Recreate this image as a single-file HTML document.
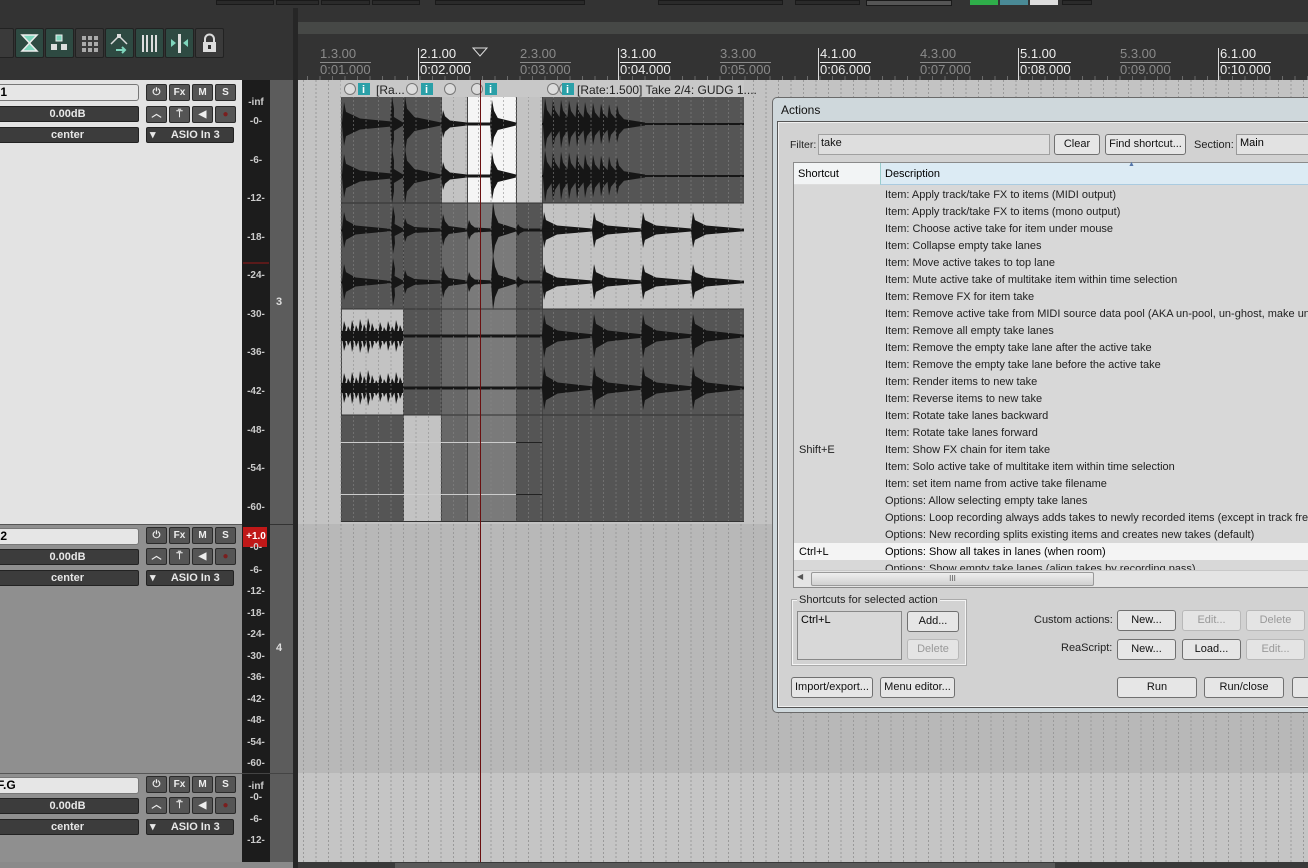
<!DOCTYPE html>
<html><head><meta charset="utf-8">
<style>
*{box-sizing:border-box;margin:0;padding:0}
body{width:1308px;height:868px;overflow:hidden;background:#333;font-family:"Liberation Sans",sans-serif;position:relative}
.a{position:absolute}
.tb{position:absolute;top:28px;width:29px;height:30px;border:1px solid #222;border-radius:2px}
.teal{background:#2e4a42}
.dk{background:#3a3a3a}
.fld{position:absolute;background:#3c3c3c;border:1px solid #222;border-radius:2px;color:#e8e8e8;font-size:11px;text-align:center;line-height:15px;font-weight:bold}
.btn{position:absolute;width:21px;height:17px;background:#555;border:1px solid #2a2a2a;border-radius:2px;color:#eee;font-size:10px;font-weight:bold;text-align:center;line-height:15px}
.ml{position:absolute;left:242px;width:28px;text-align:center;color:#ccc;font-size:10px;font-weight:bold}
.rl{position:absolute;top:47px;font-size:13px;line-height:14px}
.rl span{display:block;border-top:1px solid currentColor;margin-top:1px;padding-top:0}
.db{position:absolute;height:21px;background:#e6e6e6;border:1px solid #707070;border-radius:3px;font-size:11px;color:#111;text-align:center;line-height:19px}
.dis{color:#999;background:#e4e4e4;border-color:#b8b8b8}
.row{position:absolute;left:885px;font-size:11px;color:#222;white-space:nowrap}
</style></head><body>
<div class="a" style="left:216px;top:0;width:58px;height:5px;background:#2a2a2a;border:1px solid #1a1a1a"></div>
<div class="a" style="left:276px;top:0;width:43px;height:5px;background:#2a2a2a;border:1px solid #1a1a1a"></div>
<div class="a" style="left:321px;top:0;width:49px;height:5px;background:#2a2a2a;border:1px solid #1a1a1a"></div>
<div class="a" style="left:372px;top:0;width:48px;height:5px;background:#2a2a2a;border:1px solid #1a1a1a"></div>
<div class="a" style="left:435px;top:0;width:150px;height:5px;background:#2a2a2a;border:1px solid #1a1a1a"></div>
<div class="a" style="left:658px;top:0;width:125px;height:5px;background:#2a2a2a;border:1px solid #1a1a1a"></div>
<div class="a" style="left:795px;top:0;width:65px;height:5px;background:#2a2a2a;border:1px solid #1a1a1a"></div>
<div class="a" style="left:866px;top:0;width:86px;height:6px;background:#555;border:1px solid #1a1a1a"></div>
<div class="a" style="left:970px;top:0;width:28px;height:5px;background:#2fae4a"></div>
<div class="a" style="left:1000px;top:0;width:28px;height:5px;background:#4a8a96"></div>
<div class="a" style="left:1030px;top:0;width:28px;height:5px;background:#ddd"></div>
<div class="a" style="left:1062px;top:0;width:30px;height:5px;background:#2a2a2a;border:1px solid #1a1a1a"></div>

<div class="tb dk" style="left:-15px"></div>
<div class="tb teal" style="left:15px"><svg width="27" height="28"><polygon points="6,6 21,6 6,22 21,22" fill="#7fd6bd" stroke="#eee" stroke-width="1.5"/></svg></div>
<div class="tb teal" style="left:45px"><svg width="27" height="28"><rect x="10" y="6" width="6" height="6" fill="#7fd6bd" stroke="#eee"/><rect x="5" y="15" width="6" height="6" fill="#ddd"/><rect x="15" y="15" width="6" height="6" fill="#ddd"/></svg></div>
<div class="tb dk" style="left:75px"><svg width="27" height="28" fill="#aaa"><rect x="6" y="7" width="4" height="4"/><rect x="12" y="7" width="4" height="4"/><rect x="18" y="7" width="4" height="4"/><rect x="6" y="13" width="4" height="4"/><rect x="12" y="13" width="4" height="4"/><rect x="18" y="13" width="4" height="4"/><rect x="6" y="19" width="4" height="4"/><rect x="12" y="19" width="4" height="4"/><rect x="18" y="19" width="4" height="4"/></svg></div>
<div class="tb teal" style="left:105px"><svg width="27" height="28"><polyline points="5,15 13,7 21,15" fill="none" stroke="#ddd" stroke-width="1.5"/><rect x="11" y="5" width="4" height="4" fill="#ddd"/><path d="M10 21h9m-3-3 3 3-3 3" stroke="#7fd6bd" stroke-width="2" fill="none"/></svg></div>
<div class="tb teal" style="left:135px"><svg width="27" height="28" fill="#ddd"><rect x="6" y="6" width="2" height="17"/><rect x="10" y="6" width="2" height="17"/><rect x="15" y="6" width="2" height="17"/><rect x="19" y="6" width="2" height="17"/></svg></div>
<div class="tb teal" style="left:165px"><svg width="27" height="28"><rect x="12" y="5" width="3" height="19" fill="#ddd"/><polygon points="5,10 10,14 5,18" fill="#7fd6bd"/><polygon points="22,10 17,14 22,18" fill="#7fd6bd"/></svg></div>
<div class="tb dk" style="left:195px"><svg width="27" height="28"><path d="M9 13v-3a4.5 4.5 0 0 1 9 0v3" stroke="#ddd" stroke-width="2" fill="none"/><rect x="7" y="13" width="13" height="10" fill="#ddd"/><rect x="12" y="16" width="3" height="4" fill="#333"/></svg></div>

<div class="a" style="left:298px;top:22px;width:1010px;height:12px;background:#464846"></div>
<div class="a" style="left:293px;top:8px;width:5px;height:860px;background:#262626"></div>
<svg class="a" style="left:298px;top:40px" width="1010" height="40">
<g id="tk" stroke="#6a6a6a"></g>
<path d="M120.5 8V40M320.5 8V40M520.5 8V40M720.5 8V40M920.5 8V40" stroke="#ddd"/>
<polygon points="175,8 189,8 182,16" fill="#333" stroke="#ddd"/>
</svg>
<div class="rl" style="left:320px;color:#8a8a8a">1.3.00<span>0:01.000</span></div>
<div class="rl" style="left:420px;color:#eee">2.1.00<span>0:02.000</span></div>
<div class="rl" style="left:520px;color:#8a8a8a">2.3.00<span>0:03.000</span></div>
<div class="rl" style="left:620px;color:#eee">3.1.00<span>0:04.000</span></div>
<div class="rl" style="left:720px;color:#8a8a8a">3.3.00<span>0:05.000</span></div>
<div class="rl" style="left:820px;color:#eee">4.1.00<span>0:06.000</span></div>
<div class="rl" style="left:920px;color:#8a8a8a">4.3.00<span>0:07.000</span></div>
<div class="rl" style="left:1020px;color:#eee">5.1.00<span>0:08.000</span></div>
<div class="rl" style="left:1120px;color:#8a8a8a">5.3.00<span>0:09.000</span></div>
<div class="rl" style="left:1220px;color:#eee">6.1.00<span>0:10.000</span></div>

<div class="a" style="left:0;top:80px;width:242px;height:444px;background:#e3e3e3"></div>
<div class="a" style="left:0;top:524px;width:242px;height:249px;background:#8f8f8f;border-top:1px solid #555"></div>
<div class="a" style="left:0;top:773px;width:242px;height:90px;background:#8f8f8f;border-top:1px solid #555"></div>
<div class="a" style="left:242px;top:80px;width:28px;height:783px;background:#1c1c1c"></div>
<div class="a" style="left:270px;top:80px;width:23px;height:783px;background:#5c5c5c"></div>
<div class="a" style="left:270px;top:524px;width:23px;height:1px;background:#333"></div>
<div class="a" style="left:242px;top:773px;width:51px;height:1px;background:#444"></div>
<div class="a" style="left:276px;top:296px;color:#ddd;font-size:11px;font-weight:bold">3</div>
<div class="a" style="left:276px;top:642px;color:#ddd;font-size:11px;font-weight:bold">4</div>

<div class="a" style="left:-4px;top:84px;width:143px;height:17px;background:#e6e6e6;border:1px solid #777;border-radius:3px;font-size:12px;font-weight:bold;line-height:15px">&nbsp;1</div>
<div class="fld" style="left:-4px;top:106px;width:143px;height:16px">0.00dB</div>
<div class="fld" style="left:-4px;top:127px;width:143px;height:16px">center</div>
<div class="btn" style="left:146px;top:84px">⏻</div><div class="btn" style="left:169px;top:84px">Fx</div><div class="btn" style="left:192px;top:84px">M</div><div class="btn" style="left:215px;top:84px">S</div>
<div class="btn" style="left:146px;top:106px">︿</div><div class="btn" style="left:169px;top:106px">⍑</div><div class="btn" style="left:192px;top:106px">◀</div><div class="btn" style="left:215px;top:106px;color:#7a1f1f">●</div>
<div class="fld" style="left:146px;top:127px;width:88px;height:16px;text-align:left">&nbsp;▾&nbsp;&nbsp;&nbsp;&nbsp;&nbsp;ASIO In 3</div>
<div class="a" style="left:-4px;top:528px;width:143px;height:17px;background:#e6e6e6;border:1px solid #777;border-radius:3px;font-size:12px;font-weight:bold;line-height:15px">&nbsp;2</div>
<div class="fld" style="left:-4px;top:549px;width:143px;height:16px">0.00dB</div>
<div class="fld" style="left:-4px;top:570px;width:143px;height:16px">center</div>
<div class="btn" style="left:146px;top:527px">⏻</div><div class="btn" style="left:169px;top:527px">Fx</div><div class="btn" style="left:192px;top:527px">M</div><div class="btn" style="left:215px;top:527px">S</div>
<div class="btn" style="left:146px;top:548px">︿</div><div class="btn" style="left:169px;top:548px">⍑</div><div class="btn" style="left:192px;top:548px">◀</div><div class="btn" style="left:215px;top:548px;color:#7a1f1f">●</div>
<div class="fld" style="left:146px;top:570px;width:88px;height:16px;text-align:left">&nbsp;▾&nbsp;&nbsp;&nbsp;&nbsp;&nbsp;ASIO In 3</div>
<div class="a" style="left:-4px;top:777px;width:143px;height:17px;background:#e6e6e6;border:1px solid #777;border-radius:3px;font-size:12px;font-weight:bold;line-height:15px">F.G</div>
<div class="fld" style="left:-4px;top:798px;width:143px;height:16px">0.00dB</div>
<div class="fld" style="left:-4px;top:819px;width:143px;height:16px">center</div>
<div class="btn" style="left:146px;top:776px">⏻</div><div class="btn" style="left:169px;top:776px">Fx</div><div class="btn" style="left:192px;top:776px">M</div><div class="btn" style="left:215px;top:776px">S</div>
<div class="btn" style="left:146px;top:797px">︿</div><div class="btn" style="left:169px;top:797px">⍑</div><div class="btn" style="left:192px;top:797px">◀</div><div class="btn" style="left:215px;top:797px;color:#7a1f1f">●</div>
<div class="fld" style="left:146px;top:819px;width:88px;height:16px;text-align:left">&nbsp;▾&nbsp;&nbsp;&nbsp;&nbsp;&nbsp;ASIO In 3</div>

<div class="ml" style="top:97px">-inf</div>
<div class="ml" style="top:116px">-0-</div><div class="ml" style="top:155px">-6-</div><div class="ml" style="top:193px">-12-</div><div class="ml" style="top:232px">-18-</div>
<div class="a" style="left:243px;top:262px;width:26px;height:2px;background:#5a1a1a"></div>
<div class="ml" style="top:270px">-24-</div><div class="ml" style="top:309px">-30-</div><div class="ml" style="top:347px">-36-</div><div class="ml" style="top:386px">-42-</div><div class="ml" style="top:425px">-48-</div><div class="ml" style="top:463px">-54-</div><div class="ml" style="top:502px">-60-</div>
<div class="a" style="left:243px;top:527px;width:24px;height:20px;background:#c01818"></div>
<div class="ml" style="top:531px;color:#fff">+1.0</div>
<div class="ml" style="top:542px">-0-</div><div class="ml" style="top:565px">-6-</div><div class="ml" style="top:586px">-12-</div><div class="ml" style="top:608px">-18-</div><div class="ml" style="top:629px">-24-</div><div class="ml" style="top:651px">-30-</div><div class="ml" style="top:672px">-36-</div><div class="ml" style="top:694px">-42-</div><div class="ml" style="top:715px">-48-</div><div class="ml" style="top:737px">-54-</div><div class="ml" style="top:758px">-60-</div>
<div class="ml" style="top:781px">-inf</div><div class="ml" style="top:792px">-0-</div><div class="ml" style="top:814px">-6-</div><div class="ml" style="top:835px">-12-</div>

<div class="a" style="left:298px;top:80px;width:1010px;height:444px;background:#c3c3c3"></div>
<div class="a" style="left:298px;top:524px;width:1010px;height:249px;background:#b8b8b8"></div>
<div class="a" style="left:298px;top:773px;width:1010px;height:89px;background:#c5c5c5"></div>
<svg class="a" style="left:298px;top:80px" width="1010" height="782">
<defs><pattern id="g" width="12.5" height="4" patternUnits="userSpaceOnUse" x="5"><rect width="1" height="2" fill="#9a9a9a"/></pattern></defs>
<rect width="1010" height="782" fill="url(#g)"/>
</svg>

<svg class="a" style="left:0;top:0" width="1308" height="868" id="items">
<g id="lanes"></g>
<g id="wav" fill="#161616"></g>
<defs><pattern id="g2" width="12.5" height="4" patternUnits="userSpaceOnUse" x="303"><rect width="1" height="2" fill="#888" opacity=".55"/></pattern></defs>
<rect x="341" y="97" width="403" height="424" fill="url(#g2)"/>
<line x1="341" y1="203" x2="744" y2="203" stroke="#333"/><line x1="341" y1="309" x2="744" y2="309" stroke="#333"/><line x1="341" y1="415" x2="744" y2="415" stroke="#333"/><line x1="341" y1="521.5" x2="744" y2="521.5" stroke="#333"/>
<g id="hdr"></g>
<text x="376" y="94" font-size="12" fill="#222" font-family="Liberation Sans">[Ra...</text>
<text x="577" y="94" font-size="12" fill="#222" font-family="Liberation Sans">[Rate:1.500] Take 2/4: GUDG 1....</text>
<line x1="480.5" y1="80" x2="480.5" y2="862" stroke="#6a1010"/>
</svg>

<div class="a" style="left:0;top:862px;width:293px;height:6px;background:#8a8a8a"></div>
<div class="a" style="left:298px;top:862px;width:1010px;height:6px;background:#3a3a3a"></div>
<div class="a" style="left:395px;top:863px;width:660px;height:5px;background:#5a5a5a"></div>

<div class="a" style="left:772px;top:97px;width:540px;height:616px;background:#cfd8dc;border:1px solid #6a6a6a;border-radius:5px 0 0 5px"></div>
<div class="a" style="left:781px;top:103px;font-size:12px;color:#111">Actions</div>
<div class="a" style="left:777px;top:121px;width:535px;height:587px;background:#d2d2d2;border:1px solid #555;box-shadow:inset 0 0 0 1px #f0f0f0"></div>
<div class="a" style="left:790px;top:139px;font-size:10.5px;color:#222">Filter:</div>
<div class="a" style="left:818px;top:134px;width:232px;height:21px;background:#dedede;border:1px solid #a0a0a0;font-size:11px;padding:2px 2px;color:#111">take</div>
<div class="db" style="left:1054px;top:134px;width:46px">Clear</div>
<div class="db" style="left:1105px;top:134px;width:81px">Find shortcut...</div>
<div class="a" style="left:1194px;top:139px;font-size:11px;color:#222">Section:</div>
<div class="a" style="left:1236px;top:134px;width:80px;height:21px;background:#e2e2e2;border:1px solid #999;font-size:11px;padding:2px 3px">Main</div>

<div class="a" style="left:793px;top:162px;width:520px;height:426px;background:#d8d8d8;border:1px solid #8a8a8a"></div>
<div class="a" style="left:794px;top:163px;width:86px;height:22px;background:#f2f4f5;border-bottom:1px solid #ddd;font-size:11px;padding:5px 4px">Shortcut</div>
<div class="a" style="left:880px;top:163px;width:430px;height:22px;background:#dcebf4;border-left:1px solid #9cc;border-bottom:1px solid #aacbe0;font-size:11px;padding:5px 4px">Description</div>
<div class="a" style="left:1128px;top:161px;font-size:7px;color:#57a">▲</div>
<div class="a" style="left:794px;top:543px;width:516px;height:17px;background:#f4f4f4"></div>
<div class="a" style="left:794px;top:186px;width:516px;height:384px;overflow:hidden">
<div style="position:relative;left:-794px;top:-185px">
<div class="row" style="top:188px">Item: Apply track/take FX to items (MIDI output)</div>
<div class="row" style="top:205px">Item: Apply track/take FX to items (mono output)</div>
<div class="row" style="top:222px">Item: Choose active take for item under mouse</div>
<div class="row" style="top:239px">Item: Collapse empty take lanes</div>
<div class="row" style="top:256px">Item: Move active takes to top lane</div>
<div class="row" style="top:273px">Item: Mute active take of multitake item within time selection</div>
<div class="row" style="top:290px">Item: Remove FX for item take</div>
<div class="row" style="top:307px">Item: Remove active take from MIDI source data pool (AKA un-pool, un-ghost, make unique)</div>
<div class="row" style="top:324px">Item: Remove all empty take lanes</div>
<div class="row" style="top:341px">Item: Remove the empty take lane after the active take</div>
<div class="row" style="top:358px">Item: Remove the empty take lane before the active take</div>
<div class="row" style="top:375px">Item: Render items to new take</div>
<div class="row" style="top:392px">Item: Reverse items to new take</div>
<div class="row" style="top:409px">Item: Rotate take lanes backward</div>
<div class="row" style="top:426px">Item: Rotate take lanes forward</div>
<div class="row" style="top:443px;left:799px">Shift+E</div>
<div class="row" style="top:443px">Item: Show FX chain for item take</div>
<div class="row" style="top:460px">Item: Solo active take of multitake item within time selection</div>
<div class="row" style="top:477px">Item: set item name from active take filename</div>
<div class="row" style="top:494px">Options: Allow selecting empty take lanes</div>
<div class="row" style="top:511px">Options: Loop recording always adds takes to newly recorded items (except in track free item positioning mode)</div>
<div class="row" style="top:528px">Options: New recording splits existing items and creates new takes (default)</div>
<div class="row" style="top:545px;left:799px;color:#000">Ctrl+L</div>
<div class="row" style="top:545px;color:#000">Options: Show all takes in lanes (when room)</div>
<div class="row" style="top:562px">Options: Show empty take lanes (align takes by recording pass)</div>
</div></div>
<div class="a" style="left:794px;top:570px;width:516px;height:17px;background:#e4e4e4;border-top:1px solid #c8c8c8"></div>
<div class="a" style="left:797px;top:572px;font-size:8px;color:#555">◀</div>
<div class="a" style="left:811px;top:572px;width:283px;height:14px;background:linear-gradient(#eee,#d0d0d0);border:1px solid #999;border-radius:2px;font-size:8px;text-align:center;color:#555;line-height:12px">III</div>

<div class="a" style="left:792px;top:600px;width:174px;height:65px;border:1px solid #f4f4f4;outline:1px solid #aaa"></div>
<div class="a" style="left:797px;top:594px;background:#d2d2d2;font-size:11px;padding:0 2px;color:#222">Shortcuts for selected action</div>
<div class="a" style="left:797px;top:611px;width:105px;height:49px;background:#d8d8d8;border:1px solid #888;font-size:11px;padding:2px 3px">Ctrl+L</div>
<div class="db" style="left:907px;top:611px;width:52px">Add...</div>
<div class="db dis" style="left:907px;top:639px;width:52px">Delete</div>
<div class="a" style="left:1034px;top:614px;font-size:11px;color:#222">Custom actions:</div>
<div class="a" style="left:1061px;top:642px;font-size:11px;color:#222">ReaScript:</div>
<div class="db" style="left:1117px;top:610px;width:59px">New...</div>
<div class="db dis" style="left:1182px;top:610px;width:59px">Edit...</div>
<div class="db dis" style="left:1246px;top:610px;width:59px">Delete</div>
<div class="db" style="left:1117px;top:639px;width:59px">New...</div>
<div class="db" style="left:1182px;top:639px;width:59px">Load...</div>
<div class="db dis" style="left:1246px;top:639px;width:59px">Edit...</div>
<div class="db" style="left:791px;top:677px;width:82px">Import/export...</div>
<div class="db" style="left:880px;top:677px;width:75px">Menu editor...</div>
<div class="db" style="left:1117px;top:677px;width:80px">Run</div>
<div class="db" style="left:1204px;top:677px;width:80px">Run/close</div>
<div class="db" style="left:1292px;top:677px;width:30px"></div>

<script>
(function(){
var NS="http://www.w3.org/2000/svg";
function el(p,t,a){var e=document.createElementNS(NS,t);for(var k in a)e.setAttribute(k,a[k]);p.appendChild(e);return e;}
var cols=[341,403,441,467,516,542,744];
var D="#555",L="#c3c3c3",W="#f5f5f5",M1="#686868",M2="#7a7a7a";
var lc=[[D,D,L,W,L,D],[D,D,M1,M2,D,L],[L,D,M1,M2,D,D],[D,L,M1,M2,D,D]];
var lanes=document.getElementById("lanes");
for(var r=0;r<4;r++)for(var c=0;c<6;c++){
 el(lanes,"rect",{x:cols[c],y:97+r*106,width:cols[c+1]-cols[c],height:106,fill:lc[r][c]});
}
for(var c=0;c<6;c++){el(lanes,"line",{x1:cols[c]+.5,y1:97,x2:cols[c]+.5,y2:521,stroke:"#444"});}
var wav=document.getElementById("wav");
function spike(x,cy,A,len,end){
 var e=Math.min(x+len,end);
 var pts=[[x,cy-1],[x+2,cy-A],[x+4,cy-A*.55],[x+len*.3,cy-A*.25],[e,cy-1.5],[e,cy+1.5],[x+len*.3,cy+A*.25],[x+4,cy+A*.55],[x+2,cy+A],[x,cy+1]];
 el(wav,"polygon",{points:pts.map(function(p){return Math.min(p[0],end)+","+p[1]}).join(" ")});
}
function line(x1,x2,cy,h){el(wav,"rect",{x:x1,y:cy-h,width:x2-x1,height:2*h});}
[124,176].forEach(function(cy){
 spike(342,cy,22,60,403);spike(390,cy,28,13,403);spike(403,cy,28,38,441);spike(441,cy,14,30,467);
 line(441,516,cy,1.5);spike(490,cy,24,26,516);
 for(var x=543;x<620;x+=8)spike(x,cy,26-(x-543)*.1,30,744);
 line(542,744,cy,1);
});
[230,282].forEach(function(cy){
 line(341,542,cy,1.2);
 spike(342,cy,18,45,403);spike(391,cy,24,12,403);spike(403,cy,12,38,441);spike(441,cy,16,26,467);spike(467,cy,10,26,516);spike(491,cy,28,25,516);spike(516,cy,6,26,542);
 [542,592,641,691].forEach(function(x){line(542,744,cy,1.2);spike(x,cy,18,50,744);});
});
[336,388].forEach(function(cy){
 for(var x=342;x<400;x+=4)spike(x,cy,8+((x*7)%11),10,403);
 line(341,403,cy,5);line(403,542,cy,1.5);
 [542,592,641,691].forEach(function(x){line(542,744,cy,1.5);spike(x,cy,22,52,744);});
});
el(wav,"rect",{x:341,y:442,width:100,height:1,fill:"#ccc"});el(wav,"rect",{x:341,y:494,width:100,height:1,fill:"#ccc"});
el(wav,"rect",{x:441,y:442,width:75,height:1,fill:"#ccc"});el(wav,"rect",{x:441,y:494,width:75,height:1,fill:"#ccc"});
el(wav,"rect",{x:516,y:442,width:26,height:1,fill:"#222"});el(wav,"rect",{x:516,y:494,width:26,height:1,fill:"#222"});
var h=document.getElementById("hdr");
el(h,"rect",{x:341,y:80,width:403,height:17,fill:"#c8c8c8"});
function knob(x){el(h,"circle",{cx:x,cy:89,r:5.5,fill:"#dcdcdc",stroke:"#777"});}
function info(x){el(h,"rect",{x:x,y:83,width:12,height:12,fill:"#2aa0a8"});var t=el(h,"text",{x:x+4,y:93,"font-size":11,fill:"#fff","font-weight":"bold","font-family":"Liberation Sans"});t.textContent="i";}
knob(350);info(358);knob(412);info(421);knob(450);knob(477);info(485);knob(553);knob(565);info(562);
var tk=document.getElementById("tk");
for(var x=9.5;x<1010;x+=12.5)el(tk,"line",{x1:x,y1:36,x2:x,y2:40});
})();
</script>
</body></html>
